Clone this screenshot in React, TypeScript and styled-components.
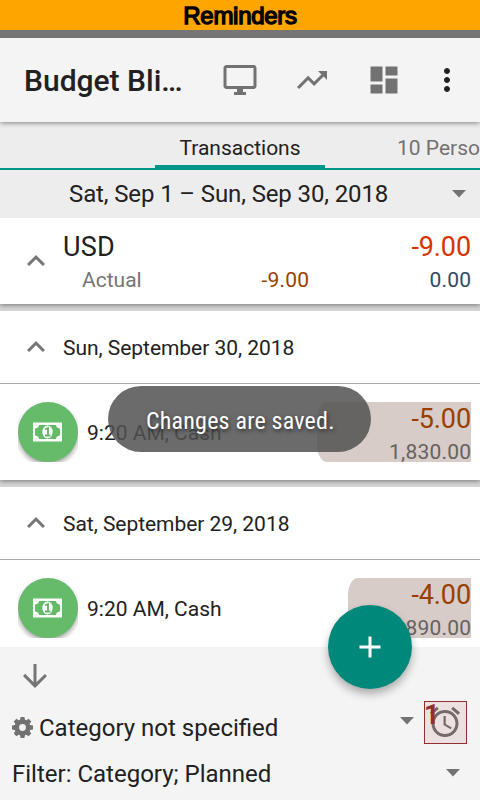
import React from "react";
import styled, { createGlobalStyle } from "styled-components";

const GlobalStyle = createGlobalStyle`
  * { box-sizing: border-box; }
  body { margin: 0; background: #d6d6d6; font-family: Roboto, "Liberation Sans", sans-serif; color: #212121; }
  svg { display: block; flex: none; }
`;

const Screen = styled.main`
  position: relative;
  display: flex;
  flex-direction: column;
  width: 480px;
  height: 800px;
  overflow: hidden;
  white-space: nowrap;
`;

const Banner = styled.header`
  height: 38px;
  flex: none;
  background: #ffa500;
  border-bottom: 8px solid #757575;
  color: #000;
  font: 24px/31px "Liberation Sans", Arial, sans-serif;
  letter-spacing: -0.3px;
  text-align: center;
  -webkit-text-stroke: 1.4px #000;
`;

const Toolbar = styled.div`
  position: relative;
  z-index: 1;
  display: flex;
  align-items: center;
  flex: none;
  height: 84px;
  padding: 0 15px 0 24px;
  background: #f4f4f4;
  box-shadow: 0 1px 5px rgba(0, 0, 0, 0.45);
  clip-path: inset(0 0 -7px 0);
`;

const Title = styled.h1`
  margin: 0;
  width: 198px;
  padding-top: 2px;
  font-size: 30px;
  font-weight: 500;
  line-height: 84px;
`;

const Actions = styled.nav`
  display: flex;
  gap: 36px;
  color: #727272;
  & > :last-child { margin-left: -9px; color: #212121; }
`;

const Tabs = styled.div`
  display: grid;
  grid-template-columns: 155px 170px 155px;
  flex: none;
  height: 48px;
  background: #ededed;
  border-bottom: 2px solid #009688;
`;

const Tab = styled.div<{ $active?: boolean }>`
  grid-column: ${(p) => (p.$active ? 2 : 3)};
  height: 46px;
  padding-left: ${(p) => (p.$active ? 0 : 72)}px;
  border-bottom: 3px solid ${(p) => (p.$active ? "#009688" : "transparent")};
  color: ${(p) => (p.$active ? "#212121" : "#727272")};
  text-align: ${(p) => (p.$active ? "center" : "left")};
  font-size: 21px;
  line-height: 53px;
  overflow: hidden;
`;

const Period = styled.div`
  display: flex;
  align-items: center;
  justify-content: space-between;
  flex: none;
  height: 48px;
  padding: 0 14px 0 69px;
  background: #ededed;
  font-size: 24px;
  letter-spacing: -0.12px;
`;

const Card = styled.section<{ $height: number }>`
  flex: none;
  height: ${(p) => p.$height}px;
  margin-bottom: 7px;
  background: #fff;
  box-shadow: 0 1px 5px rgba(0, 0, 0, 0.45);
  clip-path: inset(0 0 -7px 0);
`;

const Summary = styled(Card)`
  display: grid;
  grid-template-columns: 45px 79px 167px 1fr;
  grid-template-rows: 33px 33px;
  padding: 13px 9px 0 18px;
  line-height: 33px;
`;

const SummaryToggle = styled.div`
  grid-row: 1 / 3;
  padding-top: 12px;
  color: #757575;
`;

const Currency = styled.div`
  grid-column: 2 / 4;
  font-size: 27px;
  letter-spacing: 0.2px;
`;

const Label = styled.div`
  padding-left: 19px;
  font-size: 21px;
  color: #757575;
`;

const Amount = styled.div<{ $large?: boolean; $color: string }>`
  margin-right: ${(p) => (p.$large ? 0 : -0.2)}px;
  font-size: ${(p) => (p.$large ? 27 : 21)}px;
  letter-spacing: ${(p) => (p.$large ? -0.1 : 0.2)}px;
  color: ${(p) => p.$color};
  text-align: right;
`;

const DayHeader = styled.div`
  display: flex;
  align-items: center;
  gap: 9px;
  height: 73px;
  padding-left: 18px;
  border-bottom: 1px solid #aaa;
  font-size: 21px;
  letter-spacing: -0.04px;
  & svg { color: #757575; }
  & span { padding-top: 2px; }
`;

const Entry = styled.div`
  display: flex;
  align-items: center;
  height: 96px;
  padding: 0 9px 0 18px;
  font-size: 21px;
  & > span { padding-top: 2px; }
`;

const AccountClip = styled.div`
  width: 60px;
  height: 60px;
  margin-right: 9px;
  overflow: hidden;
`;

const AccountBadge = styled.div`
  display: flex;
  align-items: center;
  height: 60px;
  padding-left: 15px;
  border-radius: 50%;
  background: #66bb6a;
  box-shadow: 0 3px 5px rgba(0, 0, 0, 0.35);
`;

const Balance = styled.div<{ $width: number }>`
  width: ${(p) => p.$width}px;
  height: 60px;
  margin-left: auto;
  padding-top: 1px;
  border-radius: 10px 0 0 10px / 17px 0 0 17px;
  background: #d7ccc8;
  line-height: 33px;
`;

const Footer = styled.footer`
  flex: none;
  height: 153px;
  margin-top: -7px;
  padding: 11px 13px 0 12px;
  background: #f4f4f4;
  font-size: 24px;
  z-index: 1;
`;

const ExpandRow = styled.div`
  height: 43px;
  padding-left: 5px;
  color: #757575;
`;

const CategoryRow = styled.div`
  display: flex;
  align-items: center;
  height: 43px;
  & > span { margin: 10px auto 0 6px; }
  & > svg:first-child { margin-top: 10px; }
  & > svg:nth-child(3) { margin: -4px 10px 0 0; }
`;

const FilterRow = styled.div`
  display: flex;
  align-items: center;
  justify-content: space-between;
  height: 40px;
  padding-right: 7px;
  margin-top: 9px;
  & span { padding-top: 2px; }
`;

const Reminder = styled.div`
  position: relative;
  width: 43px;
  height: 43px;
  padding: 2px;
  border: 1px solid #932f2f;
  background: #ece1e1;
  color: #75696a;
`;

const Count = styled.b`
  position: absolute;
  left: -1px;
  top: -4px;
  color: #932f2f;
  font-size: 27px;
  line-height: 34px;
`;

const AddButton = styled.button`
  position: absolute;
  z-index: 2;
  left: 328px;
  top: 605px;
  display: flex;
  align-items: center;
  justify-content: center;
  width: 84px;
  height: 84px;
  padding: 0;
  border: 0;
  border-radius: 50%;
  background: #00897b;
  color: #fff;
  box-shadow: 0 5px 9px rgba(0, 0, 0, 0.3);
`;

const Toast = styled.div`
  position: absolute;
  z-index: 2;
  left: 108px;
  top: 386px;
  width: 263px;
  height: 66px;
  border-radius: 33px;
  background: rgba(81, 81, 81, 0.85);
  color: #fff;
  font-size: 24px;
  line-height: 70px;
  text-shadow: 1px 2px 4px rgba(0, 0, 0, 0.6);
`;

const ToastText = styled.span`
  display: block;
  padding-left: 38px;
  font-family: "Roboto Condensed", Roboto, sans-serif;
  letter-spacing: 0.2px;
`;

const paths = {
  monitor: "M21 2H3c-1.1 0-2 .9-2 2v12c0 1.1.9 2 2 2h7v2H8v2h8v-2h-2v-2h7c1.1 0 2-.9 2-2V4c0-1.1-.9-2-2-2zm0 14H3V4h18v12z",
  trend: "M16 6l2.29 2.29-4.88 4.88-4-4L2 16.59 3.41 18l6-6 4 4 6.3-6.29L22 12V6z",
  dashboard: "M3 13h8V3H3v10zm0 8h8v-6H3v6zm10 0h8V11h-8v10zm0-18v6h8V3h-8z",
  more: "M12 8c1.1 0 2-.9 2-2s-.9-2-2-2-2 .9-2 2 .9 2 2 2zm0 2c-1.1 0-2 .9-2 2s.9 2 2 2 2-.9 2-2-.9-2-2-2zm0 6c-1.1 0-2 .9-2 2s.9 2 2 2 2-.9 2-2-.9-2-2-2z",
  up: "M12 8l-6 6 1.41 1.41L12 10.83l4.59 4.58L18 14z",
  down: "M20 12l-1.41-1.41L13 16.17V4h-2v12.17l-5.58-5.59L4 12l8 8z",
  add: "M19 13h-6v6h-2v-6H5v-2h6V5h2v6h6z",
  alarm: "M22 5.72l-4.6-3.86-1.29 1.53 4.6 3.86L22 5.72zM7.88 3.39L6.6 1.86 2 5.71l1.29 1.53 4.59-3.85zM12.5 8H11v6l4.75 2.85.75-1.23-4-2.37V8zM12 4c-4.97 0-9 4.03-9 9s4.02 9 9 9c4.97 0 9-4.03 9-9s-4.03-9-9-9zm0 16c-3.87 0-7-3.13-7-7s3.13-7 7-7 7 3.13 7 7-3.13 7-7 7z",
};

const Icon = ({ name }: { name: keyof typeof paths }) => (
  <svg width="36" height="36" viewBox="0 0 24 24" fill="currentColor"><path d={paths[name]} /></svg>
);

const Caret = () => (
  <svg width="14" height="8" viewBox="0 0 14 8" fill="#727272"><path d="M0 0h14L7 7.5z" /></svg>
);

const Gear = () => (
  <svg width="21" height="21" viewBox="-10.5 -10.5 21 21" fill="#727272">
    {[0, 45, 90, 135, 180, 225, 270, 315].map((angle) => (
      <path key={angle} transform={`rotate(${angle})`} d="M-1.9-10.5h3.8l.8 4h-5.4z" />
    ))}
    <circle r="5.7" fill="none" stroke="#727272" strokeWidth="4.6" />
  </svg>
);

const Money = () => (
  <svg width="29" height="20" viewBox="0 0 29 20">
    <path fill="#fff" d="M0 .5h29v19H0z" />
    <path fill="#66bb6a" d="M6 3h17c0 2 2 3.5 4 3.5v7c-2 0-4 1.5-4 3.5H6c0-2-2-3.5-4-3.5v-7C4 6.5 6 5 6 3z" />
    <ellipse cx="14.5" cy="10" rx="5.2" ry="6.5" fill="#fff" />
    <path d="M12 7.5l3-1.500v7.5M12 13.5h5.5" fill="none" stroke="#66bb6a" strokeWidth="1.9" />
  </svg>
);

const days = [
  { date: "Sun, September 30, 2018", amount: "-5.00", total: "1,830.00", width: 154, height: 169 },
  { date: "Sat, September 29, 2018", amount: "-4.00", total: "890.00", width: 123, height: 160 },
];

export default function App() {
  return (
    <>
      <GlobalStyle />
      <Screen>
        <Banner>Reminders</Banner>
        <Toolbar>
          <Title>Budget Bli…</Title>
          <Actions>
            <Icon name="monitor" />
            <Icon name="trend" />
            <Icon name="dashboard" />
            <Icon name="more" />
          </Actions>
        </Toolbar>
        <Tabs>
          <Tab $active>Transactions</Tab>
          <Tab>10 Perso</Tab>
        </Tabs>
        <Period>Sat, Sep 1 – Sun, Sep 30, 2018<Caret /></Period>
        <Summary $height={86}>
          <SummaryToggle><Icon name="up" /></SummaryToggle>
          <Currency>USD</Currency>
          <Amount $large $color="#d63301">-9.00</Amount>
          <Label>Actual</Label>
          <Amount $color="#994000">-9.00</Amount>
          <Amount $color="#2f4a66">0.00</Amount>
        </Summary>
        {days.map((day) => (
          <Card key={day.date} $height={day.height}>
            <DayHeader><Icon name="up" /><span>{day.date}</span></DayHeader>
            <Entry>
              <AccountClip><AccountBadge><Money /></AccountBadge></AccountClip>
              <span>9:20 AM, Cash</span>
              <Balance $width={day.width}>
                <Amount $large $color="#994000">{day.amount}</Amount>
                <Amount $color="#666160">{day.total}</Amount>
              </Balance>
            </Entry>
          </Card>
        ))}
        <Footer>
          <ExpandRow><Icon name="down" /></ExpandRow>
          <CategoryRow>
            <Gear />
            <span>Category not specified</span>
            <Caret />
            <Reminder><Icon name="alarm" /><Count>1</Count></Reminder>
          </CategoryRow>
          <FilterRow><span>Filter: Category; Planned</span><Caret /></FilterRow>
        </Footer>
        <AddButton aria-label="Add"><Icon name="add" /></AddButton>
        <Toast role="status"><ToastText>Changes are saved.</ToastText></Toast>
      </Screen>
    </>
  );
}
